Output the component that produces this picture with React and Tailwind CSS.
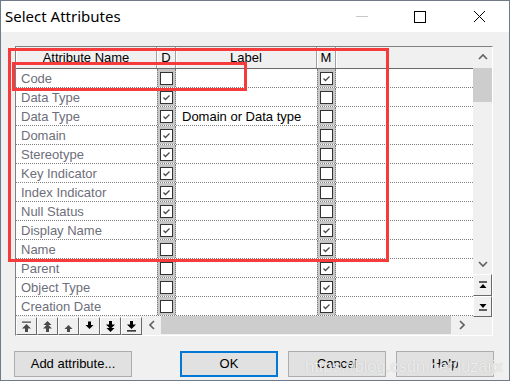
const rows = [
  { name: "Code", d: false, m: true },
  { name: "Data Type", d: true, m: false },
  { name: "Data Type", d: true, m: false, label: "Domain or Data type" },
  { name: "Domain", d: true, m: false },
  { name: "Stereotype", d: true, m: false },
  { name: "Key Indicator", d: true, m: false },
  { name: "Index Indicator", d: true, m: false },
  { name: "Null Status", d: true, m: false },
  { name: "Display Name", d: true, m: true },
  { name: "Name", d: false, m: true },
  { name: "Parent", d: false, m: true },
  { name: "Object Type", d: false, m: true },
  { name: "Creation Date", d: false, m: true },
];

function Box({ checked }) {
  return (
    <div className="w-[13px] h-[13px] bg-white border border-[#333333] flex items-center justify-center">
      {checked && (
        <svg width="11" height="11" viewBox="0 0 11 11">
          <path d="M2.5 5.5 L4.5 7.5 L8.5 3.5" fill="none" stroke="#4a4a4a" strokeWidth="1.3" />
        </svg>
      )}
    </div>
  );
}

function CheckCell({ checked }) {
  return (
    <div className="w-[19px] h-full bg-[#c6c6c6] border-x border-dotted border-[#7a7a7a] flex items-center justify-center">
      <Box checked={checked} />
    </div>
  );
}

function HeadCell({ w, children }) {
  return (
    <div
      className={`${w} h-full flex items-center justify-center border-r border-[#a0a0a0] shadow-[inset_1px_0_0_#ffffff]`}
    >
      {children}
    </div>
  );
}

// arrow glyphs for the move-row buttons
const toolPaths = {
  upTop: "M1 0.5 H10 V1.8 H1 Z M5.5 3 L1 7.5 H4 V11 H7 V7.5 H10 Z",
  upDouble: "M5.5 0 L1.5 4 H9.5 Z M5.5 3 L1 7.5 H4 V11 H7 V7.5 H10 Z",
  up: "M5.5 4 L1.5 8 H4 V11 H7 V8 H9.5 Z",
  down: "M5.5 8 L1.5 4 H4 V0.5 H7 V4 H9.5 Z",
  downDouble: "M5.5 11 L1.5 7 H9.5 Z M5.5 8 L1 3.5 H4 V0 H7 V3.5 H10 Z",
  downBottom: "M1 9.2 H10 V10.5 H1 Z M5.5 8 L1 3.5 H4 V0 H7 V3.5 H10 Z",
};

function ToolButton({ kind, color }) {
  return (
    <div className="w-[21px] h-[18px] bg-[#f0f0f0] border-t border-l border-white border-r border-b border-r-[#696969] border-b-[#696969] flex items-center justify-center">
      <svg width="11" height="11" viewBox="0 0 11 11">
        <path d={toolPaths[kind]} fill={color} />
      </svg>
    </div>
  );
}

function Chevron({ dir }) {
  const d = {
    up: "M1 6 L5 2 L9 6",
    down: "M1 2 L5 6 L9 2",
    left: "M5 1 L1 5 L5 9",
    right: "M1 1 L5 5 L1 9",
  }[dir];
  const horiz = dir === "left" || dir === "right";
  return (
    <svg width={horiz ? 6 : 10} height={horiz ? 10 : 8} viewBox={horiz ? "0 0 6 10" : "0 0 10 8"}>
      <path d={d} fill="none" stroke="#606060" strokeWidth="1.6" />
    </svg>
  );
}

function WinButton({ w, focused, children }) {
  return (
    <div
      className={`${w} h-[26px] bg-[#e1e1e1] flex items-center justify-center text-[13px] text-black ${
        focused ? "border-2 border-[#0078d7]" : "border border-[#adadad]"
      }`}
    >
      {children}
    </div>
  );
}

export default function App() {
  return (
    <div
      className="relative w-[510px] h-[381px] border border-[#6f7b88] flex flex-col overflow-hidden"
      style={{ fontFamily: '"Liberation Sans", Arial, sans-serif' }}
    >
      {/* title bar */}
      <div className="h-[31px] bg-white flex items-center shrink-0">
        <div className="pl-[4px] text-[15px] text-black flex-1" style={{ fontFamily: '"Noto Sans", sans-serif' }}>
          Select Attributes
        </div>
        <div className="w-[12px] h-px bg-[#c8c8c8] mr-[46px]" />
        <div className="w-[12px] h-[12px] border border-black mr-[47px]" />
        <svg width="13" height="13" viewBox="0 0 13 13" className="mr-[23px]">
          <path d="M1 1 L12 12 M12 1 L1 12" stroke="#000" strokeWidth="1" />
        </svg>
      </div>

      {/* body */}
      <div className="flex-1 bg-[#f0f0f0] flex flex-col">
        <div className="ml-[14px] mt-[14px] w-[478px] h-[290px] border-t border-l border-[#808080] border-r border-b border-r-white border-b-white flex">
          <div className="w-[457px] flex flex-col">
            {/* header */}
            <div className="h-[22px] bg-[#f0f0f0] border-b border-[#696969] flex text-[13px] text-black">
              <HeadCell w="w-[141px]">Attribute Name</HeadCell>
              <HeadCell w="w-[19px]">D</HeadCell>
              <HeadCell w="w-[141px]">Label</HeadCell>
              <HeadCell w="w-[19px]">M</HeadCell>
              <div className="flex-1 shadow-[inset_1px_0_0_#ffffff]" />
            </div>
            {/* rows */}
            <div className="bg-white">
              {rows.map((r, i) => (
                <div key={i} className="h-[19px] flex items-center border-b border-dotted border-[#808080] text-[13px]">
                  <div className="w-[141px] pl-[5px] pt-px text-[#6e6e7a] truncate">{r.name}</div>
                  <CheckCell checked={r.d} />
                  <div className="w-[141px] pl-[6px] pt-px text-black whitespace-nowrap">{r.label || ""}</div>
                  <CheckCell checked={r.m} />
                  <div className="flex-1" />
                </div>
              ))}
            </div>
            {/* toolbar + horizontal scrollbar */}
            <div className="flex-1 flex items-stretch bg-[#f0f0f0]">
              <div className="flex items-start pt-[1px] border-b border-[#404040] h-[19px] self-start">
                <ToolButton kind="upTop" color="#4a4a4a" />
                <ToolButton kind="upDouble" color="#4a4a4a" />
                <ToolButton kind="up" color="#4a4a4a" />
                <ToolButton kind="down" color="#000" />
                <ToolButton kind="downDouble" color="#000" />
                <ToolButton kind="downBottom" color="#000" />
              </div>
              <div className="flex-1 flex items-stretch h-[18px]">
                <div className="w-[19px] flex items-center justify-center">
                  <Chevron dir="left" />
                </div>
                <div className="flex-1 bg-[#cdcdcd]" />
                <div className="w-[22px] flex items-center justify-center">
                  <Chevron dir="right" />
                </div>
              </div>
            </div>
          </div>

          {/* vertical scrollbar */}
          <div className="w-[19px] flex flex-col bg-[#f0f0f0]">
            <div className="h-[20px] flex items-center justify-center">
              <Chevron dir="up" />
            </div>
            <div className="h-[34px] mt-px bg-[#cdcdcd]" />
            <div className="h-[152px]" />
            <div className="h-[19px] flex items-center justify-center">
              <Chevron dir="down" />
            </div>
            <div className="h-[22px] mt-px bg-[#f0f0f0] border-t border-l border-white border-r border-b border-r-[#696969] border-b-[#696969] flex items-center justify-center">
              <svg width="10" height="9" viewBox="0 0 10 9">
                <path d="M1 1 H9" stroke="#000" strokeWidth="1.2" />
                <path d="M5 3 L1.5 7 H8.5 Z" fill="#000" />
              </svg>
            </div>
            <div className="h-[21px] bg-[#f0f0f0] border-t border-l border-white border-r border-b border-r-[#696969] border-b-[#696969] flex items-center justify-center">
              <svg width="10" height="9" viewBox="0 0 10 9">
                <path d="M5 6 L1.5 2 H8.5 Z" fill="#000" />
                <path d="M1 8 H9" stroke="#000" strokeWidth="1.2" />
              </svg>
            </div>
          </div>
        </div>

        {/* buttons */}
        <div className="mt-[15px] ml-[13px] flex">
          <WinButton w="w-[118px]">Add attribute...</WinButton>
          <div className="ml-[48px]">
            <WinButton w="w-[98px]" focused>
              OK
            </WinButton>
          </div>
          <div className="ml-[10px]">
            <WinButton w="w-[98px]">Cancel</WinButton>
          </div>
          <div className="ml-[10px]">
            <WinButton w="w-[98px]">Help</WinButton>
          </div>
        </div>
      </div>

      {/* red annotation boxes */}
      <div className="absolute left-[7px] top-[47px] w-[381px] h-[214px] border-[3px] border-[#f53b3b] pointer-events-none" />
      <div className="absolute left-[11px] top-[61px] w-[235px] h-[29px] border-[3px] border-[#f53b3b] pointer-events-none" />

      {/* watermark */}
      <div className="absolute left-[304px] top-[353px] text-[16.5px] text-white/75 whitespace-nowrap pointer-events-none [text-shadow:0_0_1px_#b0b0b0]">
        https://blog.csdn.net/luzaijx
      </div>
    </div>
  );
}
